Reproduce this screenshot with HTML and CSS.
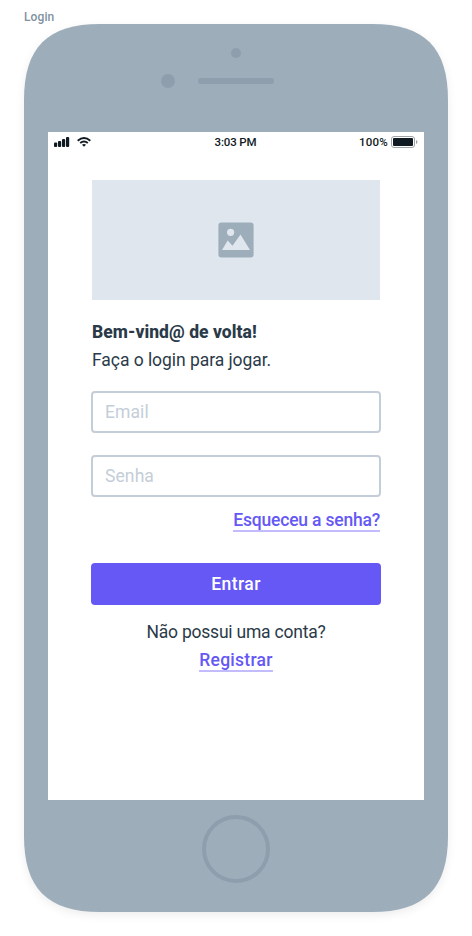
FILE: index.html
```html
<!DOCTYPE html>
<html lang="pt-BR">
<head>
<meta charset="utf-8">
<title>Login</title>
<link rel="stylesheet" href="styles.css">
</head>
<body>
<div class="label"><span class="label-text">Login</span></div>
<div class="phone">
  <svg class="shell" viewBox="0 0 424 888" aria-hidden="true"><path d="M0 76C0 23.500 23.500 0 76 0H348C400.500 0 424 23.500 424 76V812C424 864.500 400.500 888 348 888H76C23.500 888 0 864.500 0 812Z"/></svg>
  <header class="top">
    <span class="sensor"></span>
    <div class="speaker-row"><span class="camera"></span><span class="speaker"></span></div>
  </header>
  <main class="screen">
    <div class="status">
      <div class="signals">
        <svg width="16" height="10" viewBox="0 0 16 10"><rect x="0" y="5.500" width="3.200" height="4.500" rx="1"/><rect x="4" y="4" width="3.200" height="6" rx="1"/><rect x="8" y="2" width="3.200" height="8" rx="1"/><rect x="12" y="0" width="3.200" height="10" rx="1"/></svg>
        <svg width="14" height="10" viewBox="0 0 14 10"><g fill="none" stroke="#101a23" stroke-width="1.900"><path d="M.7 3.700Q7-1.700 13.300 3.700M3.200 6.100Q7 3 10.800 6.100"/></g><path d="M5 7.700Q7 6.400 9 7.700L7 9.800Z"/></svg>
      </div>
      <span class="time">3:03 PM</span>
      <div class="power"><span class="percent">100%</span>
        <svg width="27" height="12" viewBox="0 0 27 12"><rect x=".5" y=".5" width="23" height="11" rx="2.500" fill="none" stroke="#a0a4a7"/><rect x="2" y="2" width="20" height="8" rx="1"/><path d="M25 4Q26.500 4.500 26.500 6T25 8Z" fill="#a0a4a7"/></svg>
      </div>
    </div>
    <form class="content">
      <div class="picture"><svg width="36" height="36" viewBox="0 0 36 36"><rect x=".4" y=".4" width="35.200" height="35.200" rx="3" fill="#9eadba"/><circle cx="12.600" cy="10.300" r="3.600" fill="#dfe6ee"/><path d="M4 28L9.700 18.500L14.500 23.800L22.500 12.500L32 28Z" fill="#dfe6ee"/></svg></div>
      <h1><span class="t-title">Bem-vind@ de volta!</span></h1>
      <p><span class="t-sub">Faça o login para jogar.</span></p>
      <div class="field"><span class="t-field">Email</span></div>
      <div class="field second"><span class="t-field">Senha</span></div>
      <div class="forgot"><a class="t-forgot">Esqueceu a senha?</a></div>
      <div class="button"><span class="t-enter">Entrar</span></div>
      <p class="center"><span class="t-account">Não possui uma conta?</span></p>
      <div class="center"><a class="t-register">Registrar</a></div>
    </form>
  </main>
  <footer class="bottom"><span class="home"></span></footer>
</div>
</body>
</html>
```
FILE: styles.css
```css
* { box-sizing: border-box; }
body {
  margin: 0;
  height: 936px;
  overflow: hidden;
  background: #fff;
  color: #2a3a48;
  font: 17.500px/28px Roboto, sans-serif;
}
.label {
  height: 24px;
  padding: 5px 0 0 24px;
  font-size: 12px;
  line-height: 24px;
  color: #8191a0;
}
.label-text { display: block; font-weight: 500; letter-spacing: .1px; }
.phone { position: relative; width: 424px; height: 888px; margin-left: 24px; }
.shell {
  position: absolute;
  inset: 0;
  z-index: -1;
  overflow: visible;
  fill: #9eadba;
  filter: drop-shadow(0 3px 4px rgba(0, 0, 0, .07));
}
.top {
  height: 108px;
  padding-top: 24px;
  display: flex;
  flex-direction: column;
  align-items: center;
}
.sensor { width: 10px; height: 10px; border-radius: 50%; background: #8e9eac; }
.speaker-row { display: flex; align-items: center; gap: 23px; margin: 16px 0 0 -37px; }
.camera { width: 14px; height: 14px; border-radius: 50%; background: #8e9eac; }
.speaker { width: 76px; height: 6px; border-radius: 3px; background: #8e9eac; }
.screen { width: 376px; height: 668px; margin: 0 24px; background: #fff; }
.status {
  height: 20px;
  padding: 0 6px;
  display: grid;
  grid-template-columns: 1fr auto 1fr;
  align-items: center;
  font-size: 11.500px;
  line-height: 20px;
  font-weight: 500;
  color: #101a23;
}
.status svg { display: block; fill: #101a23; }
.signals { display: flex; gap: 7px; }
.time { letter-spacing: -.15px; margin-right: 1px; }
.percent { letter-spacing: .2px; }
.power { display: flex; justify-content: flex-end; align-items: center; gap: 3px; }
.content { width: 288px; margin: 28px 44px 0; }
.picture {
  height: 120px;
  display: flex;
  justify-content: center;
  align-items: center;
  background: #dfe6ee;
}
h1, p { margin: 0; font-size: inherit; height: 28px; }
h1 { margin-top: 18px; font-weight: 800; letter-spacing: .05px; }
.t-sub { letter-spacing: -.05px; }
.t-field { letter-spacing: .1px; }
.field {
  height: 42px;
  margin: 17px -1px 0;
  padding: 0 12px;
  border: 2px solid #c4ced8;
  border-radius: 4px;
  color: #c4ced8;
  line-height: 38px;
}
.second { margin-top: 22px; }
.forgot { height: 28px; margin-top: 9px; text-align: right; }
a { display: inline-block; height: 26px; border-bottom: 2px solid #c2bcfc; color: #6558f5; font-weight: 500; white-space: nowrap; }
.t-forgot { letter-spacing: -.2px; }
.t-register { letter-spacing: .25px; }
.t-enter { letter-spacing: .45px; }
.t-account { letter-spacing: -.22px; }
.button {
  height: 42px;
  margin: 29px -1px 13px;
  border-radius: 4px;
  background: #6558f5;
  color: #fff;
  line-height: 42px;
  font-weight: 500;
  text-align: center;
}
.center { height: 28px; text-align: center; }
.bottom { height: 112px; padding-top: 15px; display: flex; justify-content: center; }
.home { width: 68px; height: 68px; border: 4px solid #8e9eac; border-radius: 50%; }
```
